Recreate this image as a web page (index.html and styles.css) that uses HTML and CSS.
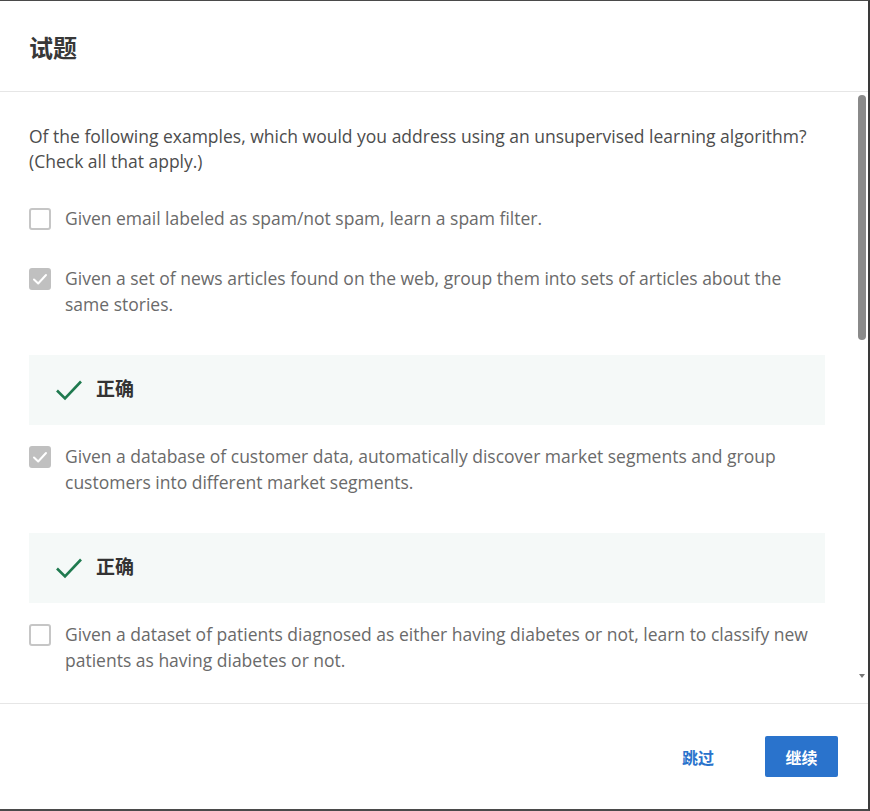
FILE: index.html
```html
<!DOCTYPE html>
<html lang="zh">
<head>
<meta charset="utf-8">
<title>试题</title>
<link rel="stylesheet" href="styles.css">
</head>
<body>
<div class="modal">
  <header class="modal-header">
    <h1 class="modal-title">试题</h1>
  </header>
  <main class="modal-body">
    <div class="scroll-content">
      <p class="question">Of the following examples, which would you address using an unsupervised learning algorithm? (Check all that apply.)</p>
      <div class="choices">
        <div class="choice">
          <span class="checkbox"></span>
          <span class="choice-text">Given email labeled as spam/not spam, learn a spam filter.</span>
        </div>
        <div class="choice">
          <span class="checkbox checked"><svg viewBox="0 0 22 22" width="22" height="22"><path d="M5 11.5 L9.2 15.5 L17 7" fill="none" stroke="#fff" stroke-width="2" stroke-linecap="round" stroke-linejoin="round"/></svg></span>
          <span class="choice-text">Given a set of news articles found on the web, group them into sets of articles about the same stories.</span>
        </div>
        <div class="feedback">
          <svg class="feedback-icon" viewBox="0 0 28 24" width="28" height="24"><path d="M2 12.5 L10 20.5 L26 3.5" fill="none" stroke="#1f7a4f" stroke-width="2.6"/></svg>
          <span class="feedback-text">正确</span>
        </div>
        <div class="choice">
          <span class="checkbox checked"><svg viewBox="0 0 22 22" width="22" height="22"><path d="M5 11.5 L9.2 15.5 L17 7" fill="none" stroke="#fff" stroke-width="2" stroke-linecap="round" stroke-linejoin="round"/></svg></span>
          <span class="choice-text">Given a database of customer data, automatically discover market segments and group customers into different market segments.</span>
        </div>
        <div class="feedback">
          <svg class="feedback-icon" viewBox="0 0 28 24" width="28" height="24"><path d="M2 12.5 L10 20.5 L26 3.5" fill="none" stroke="#1f7a4f" stroke-width="2.6"/></svg>
          <span class="feedback-text">正确</span>
        </div>
        <div class="choice">
          <span class="checkbox"></span>
          <span class="choice-text">Given a dataset of patients diagnosed as either having diabetes or not, learn to classify new patients as having diabetes or not.</span>
        </div>
      </div>
    </div>
    <div class="scroll-thumb"></div>
    <div class="scroll-arrow"></div>
  </main>
  <footer class="modal-footer">
    <button class="btn-skip">跳过</button>
    <button class="btn-continue">继续</button>
  </footer>
</div>
</body>
</html>
```
FILE: styles.css
```css
* { box-sizing: border-box; }
html, body { margin: 0; padding: 0; background: #fff; }
body {
  font-family: "Open Sans", "Noto Sans CJK SC", sans-serif;
}
.modal {
  width: 870px;
  height: 811px;
  border-top: 1px solid #4a4a4a;
  border-right: 2px solid #3a3a3a;
  border-bottom: 2px solid #4a4a4a;
  display: flex;
  flex-direction: column;
  background: #fff;
}
.modal-header {
  height: 91px;
  flex: none;
  border-bottom: 1px solid #e6e6e6;
  display: flex;
  align-items: center;
  padding-left: 29px;
}
.modal-title {
  margin: 0;
  font-family: "Noto Sans CJK SC", sans-serif;
  font-size: 24px;
  font-weight: 700;
  color: #383838;
  line-height: 1;
  padding-top: 1px;
}
.modal-body {
  position: relative;
  height: 612px;
  flex: none;
  overflow: hidden;
  border-bottom: 1px solid #e6e6e6;
}
.scroll-content {
  padding: 32px 43px 0 29px;
}
.question {
  margin: 0 0 31px;
  font-size: 17.5px;
  line-height: 25px;
  color: #4d4d4d;
}
.choices {
  display: flex;
  flex-direction: column;
}
.choice {
  display: flex;
  align-items: flex-start;
  gap: 14px;
  margin-bottom: 34px;
}
.checkbox {
  flex: none;
  width: 22px;
  height: 22px;
  margin-top: 3px;
  border: 2px solid #c6c6c6;
  border-radius: 3px;
  display: flex;
  align-items: center;
  justify-content: center;
}
.checkbox.checked {
  background: #c0c0c0;
  border-color: #c0c0c0;
}
.checkbox svg { flex: none; margin: -2px; }
.choice-text {
  font-size: 17.5px;
  line-height: 26px;
  color: #6a6a6a;
}
.feedback {
  margin-top: 4px;
  margin-bottom: 18px;
  height: 70px;
  background: #f5f9f8;
  display: flex;
  align-items: center;
  padding-left: 26px;
  gap: 13px;
}
.feedback-icon { flex: none; }
.feedback-text {
  font-family: "Noto Sans CJK SC", sans-serif;
  font-size: 19px;
  font-weight: 700;
  color: #333;
  padding-bottom: 5px;
}
.scroll-thumb {
  position: absolute;
  right: 2px;
  top: 3px;
  width: 8px;
  height: 245px;
  border-radius: 4px;
  background: #8a8a8a;
}
.scroll-arrow {
  position: absolute;
  right: 3px;
  top: 582px;
  width: 0;
  height: 0;
  border-left: 3px solid transparent;
  border-right: 3px solid transparent;
  border-top: 4px solid #777;
}
.modal-footer {
  flex: 1;
  display: flex;
  align-items: center;
  justify-content: flex-end;
  padding-right: 30px;
}
.btn-skip {
  font-family: "Noto Sans CJK SC", sans-serif;
  font-size: 16px;
  font-weight: 700;
  color: #2a73cc;
  background: none;
  border: none;
  padding: 0;
  margin-right: 51px;
  cursor: pointer;
}
.btn-continue {
  font-family: "Noto Sans CJK SC", sans-serif;
  font-size: 16px;
  font-weight: 700;
  color: #fff;
  background: #2a73cc;
  border: none;
  border-radius: 2px;
  width: 73px;
  height: 41px;
  padding: 0;
  cursor: pointer;
}
```
